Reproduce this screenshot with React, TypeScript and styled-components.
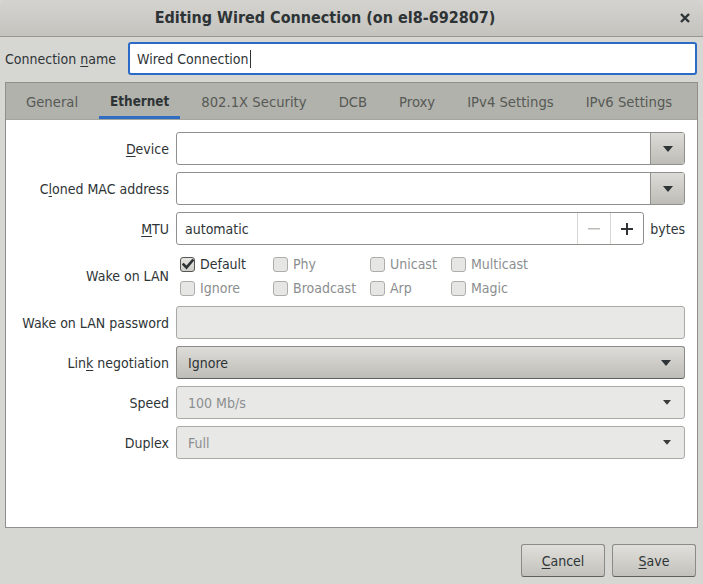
import React from "react";
import styled, { createGlobalStyle } from "styled-components";

const Global = createGlobalStyle`
  html, body { margin: 0; padding: 0; }
  body { font-family: "DejaVu Sans Condensed", "DejaVu Sans", sans-serif; font-size: 14px; color: #2e3436; }
  * { box-sizing: border-box; }
`;

const Window = styled.div`
  width: 703px;
  height: 584px;
  background: #d6d6d3;
  display: flex;
  flex-direction: column;
  overflow: hidden;
`;

const TitleBar = styled.div`
  height: 37px;
  flex: none;
  display: flex;
  align-items: center;
  justify-content: center;
  position: relative;
  background: linear-gradient(#d4d3cf, #c4c3be);
  border-bottom: 1px solid #97968f;
  border-radius: 6px 6px 0 0;
  font-weight: bold;
  font-size: 16px;
  color: #2e3436;
  padding: 0 53px 1px 0;
`;

const Close = styled.span`
  position: absolute;
  right: 12px;
  top: 10px;
  width: 12px;
  height: 16px;
  display: flex;
  align-items: center;
  justify-content: center;
`;

const NameRow = styled.div`
  display: flex;
  align-items: center;
  gap: 12px;
  margin: 5px 6px 0 5px;
  height: 33px;
`;

const NameEntry = styled.div`
  flex: 1;
  height: 33px;
  background: #fff;
  border: 2px solid #2c6bc5;
  border-radius: 3px;
  display: flex;
  align-items: center;
  padding-left: 7px;
`;

const Caret = styled.span`
  display: inline-block;
  width: 1px;
  height: 18px;
  background: #2e3436;
  margin-left: 1px;
`;

const Notebook = styled.div`
  margin: 7px 5px 0 5px;
  border: 1px solid #8f908b;
  height: 446px;
  flex: none;
  display: flex;
  flex-direction: column;
  background: #fff;
`;

const TabBar = styled.div`
  height: 37px;
  flex: none;
  background: #b1b2ac;
  border-bottom: 1px solid #a4a59f;
  display: flex;
  align-items: stretch;
  padding-left: 9px;
`;

const Tab = styled.div<{ $active?: boolean }>`
  padding: 0 11px;
  margin-right: 10px;
  display: flex;
  align-items: center;
  font-size: ${(p) => (p.$active ? "13.4px" : "14.7px")};
  color: ${(p) => (p.$active ? "#2e3436" : "#575955")};
  font-weight: ${(p) => (p.$active ? "bold" : "normal")};
  box-shadow: ${(p) => (p.$active ? "inset 0 -3px 0 #2f6cc2" : "none")};
`;

const Form = styled.div`
  display: grid;
  grid-template-columns: 163px 1fr;
  column-gap: 7px;
  row-gap: 7px;
  padding: 12px 12px 0 0;
  align-items: center;
`;

const Label = styled.div`
  text-align: right;
  white-space: nowrap;
`;

const Entry = styled.div<{ $disabled?: boolean }>`
  height: 33px;
  background: ${(p) => (p.$disabled ? "#e8e8e7" : "#fff")};
  border: 1px solid ${(p) => (p.$disabled ? "#a9a9a6" : "#8f908c")};
  border-radius: 3px;
  display: flex;
  align-items: center;
  overflow: hidden;
`;

const EntryText = styled.span`
  flex: 1;
  padding-left: 8px;
`;

const ComboButton = styled.div`
  width: 34px;
  height: 100%;
  flex: none;
  border-left: 1px solid #8f908c;
  background: linear-gradient(#dcdbd7, #bdbcb6);
  display: flex;
  align-items: center;
  justify-content: center;
`;

const SpinButton = styled.div<{ $disabled?: boolean }>`
  width: 33px;
  height: 100%;
  flex: none;
  border-left: 1px solid #d6d6d3;
  display: flex;
  align-items: center;
  justify-content: center;
  color: ${(p) => (p.$disabled ? "#bcbcb9" : "#2e3436")};
`;

const MtuRow = styled.div`
  display: flex;
  align-items: center;
  gap: 6px;
`;

const Unit = styled.span`
  flex: none;
`;

const CheckGrid = styled.div`
  display: grid;
  grid-template-columns: 93px 97px 81px auto;
  grid-auto-rows: 24px;
  padding-left: 4px;
  align-items: center;
  margin: 0 0 -1px 0;
`;

const Check = styled.label<{ $disabled?: boolean }>`
  display: flex;
  align-items: center;
  gap: 5px;
  color: ${(p) => (p.$disabled ? "#8b8e8f" : "#2e3436")};
`;

const Box = styled.span<{ $checked?: boolean }>`
  width: 15px;
  height: 15px;
  border-radius: 3px;
  border: 1px solid ${(p) => (p.$checked ? "#555753" : "#adadab")};
  background: ${(p) => (p.$checked ? "linear-gradient(#e6e5e2, #cfceca)" : "#e6e6e5")};
  display: flex;
  align-items: center;
  justify-content: center;
`;

const Combo = styled.div<{ $disabled?: boolean }>`
  height: 33px;
  border: 1px solid ${(p) => (p.$disabled ? "#a9a9a6" : "#8a8a86")};
  border-bottom-color: ${(p) => (p.$disabled ? "#a9a9a6" : "#5e5e5a")};
  border-radius: 3px;
  background: ${(p) => (p.$disabled ? "#e8e8e7" : "linear-gradient(#dddcd8, #bebdb7)")};
  color: ${(p) => (p.$disabled ? "#8b8e8f" : "#2e3436")};
  display: flex;
  align-items: center;
  justify-content: space-between;
  padding: 0 13px 0 11px;
`;

const Footer = styled.div`
  flex: 1;
  display: flex;
  justify-content: flex-end;
  align-items: flex-end;
  gap: 7px;
  padding: 0 7px 7px 0;
`;

const Button = styled.button`
  width: 84px;
  height: 33px;
  font: inherit;
  color: #2e3436;
  border: 1px solid #8a8a86;
  border-bottom-color: #5e5e5a;
  border-radius: 3px;
  background: linear-gradient(#e0dfdb, #c2c1bb);
  padding: 0;
`;

const U = styled.span`
  text-decoration: underline;
  text-underline-offset: 2px;
`;

const Arrow = ({ color = "#2e3436", size = 10 }: { color?: string; size?: number }) => (
  <svg width={size} height={size * 0.6} viewBox="0 0 10 6">
    <path d="M0 0 L10 0 L5 6 Z" fill={color} />
  </svg>
);

const CheckMark = () => (
  <svg width="12" height="11" viewBox="0 0 12 11">
    <path d="M1.5 5.5 L4.5 8.5 L10.5 1.5" stroke="#2e3436" strokeWidth="2.6" fill="none" strokeLinecap="square" />
  </svg>
);

const tabs = ["General", "Ethernet", "802.1X Security", "DCB", "Proxy", "IPv4 Settings", "IPv6 Settings"];

const CB = ({ label, checked, disabled }: { label: React.ReactNode; checked?: boolean; disabled?: boolean }) => (
  <Check $disabled={disabled}>
    <Box $checked={checked}>{checked && <CheckMark />}</Box>
    <span>{label}</span>
  </Check>
);

export default function App() {
  return (
    <>
      <Global />
      <Window>
        <TitleBar>
          Editing Wired Connection (on el8-692807)
          <Close>
            <svg width="10" height="10" viewBox="0 0 10 10">
              <path d="M1 1 L9 9 M9 1 L1 9" stroke="#2e3436" strokeWidth="2.4" />
            </svg>
          </Close>
        </TitleBar>
        <NameRow>
          <span>
            Connection <U>n</U>ame
          </span>
          <NameEntry>
            Wired Connection
            <Caret />
          </NameEntry>
        </NameRow>
        <Notebook>
          <TabBar>
            {tabs.map((t) => (
              <Tab key={t} $active={t === "Ethernet"}>
                {t}
              </Tab>
            ))}
          </TabBar>
          <Form>
            <Label>
              <U>D</U>evice
            </Label>
            <Entry>
              <EntryText />
              <ComboButton>
                <Arrow />
              </ComboButton>
            </Entry>

            <Label>
              C<U>l</U>oned MAC address
            </Label>
            <Entry>
              <EntryText />
              <ComboButton>
                <Arrow />
              </ComboButton>
            </Entry>

            <Label>
              <U>M</U>TU
            </Label>
            <MtuRow>
              <Entry style={{ flex: 1 }}>
                <EntryText>automatic</EntryText>
                <SpinButton $disabled>
                  <svg width="12" height="2" viewBox="0 0 12 2">
                    <rect width="12" height="1.5" fill="currentColor" />
                  </svg>
                </SpinButton>
                <SpinButton>
                  <svg width="12" height="12" viewBox="0 0 12 12">
                    <path d="M6 0 V12 M0 6 H12" stroke="currentColor" strokeWidth="2" />
                  </svg>
                </SpinButton>
              </Entry>
              <Unit>bytes</Unit>
            </MtuRow>

            <Label>Wake on LAN</Label>
            <CheckGrid>
              <CB checked label={<>De<U>f</U>ault</>} />
              <CB disabled label="Phy" />
              <CB disabled label="Unicast" />
              <CB disabled label="Multicast" />
              <CB disabled label="Ignore" />
              <CB disabled label="Broadcast" />
              <CB disabled label="Arp" />
              <CB disabled label="Magic" />
            </CheckGrid>

            <Label>Wake on LAN password</Label>
            <Entry $disabled />

            <Label>
              Lin<U>k</U> negotiation
            </Label>
            <Combo>
              <span>Ignore</span>
              <Arrow />
            </Combo>

            <Label>Speed</Label>
            <Combo $disabled>
              <span>100 Mb/s</span>
              <Arrow color="#3a3c3c" size={8} />
            </Combo>

            <Label>Duplex</Label>
            <Combo $disabled>
              <span>Full</span>
              <Arrow color="#3a3c3c" size={8} />
            </Combo>
          </Form>
        </Notebook>
        <Footer>
          <Button>
            <U>C</U>ancel
          </Button>
          <Button>
            <U>S</U>ave
          </Button>
        </Footer>
      </Window>
    </>
  );
}
